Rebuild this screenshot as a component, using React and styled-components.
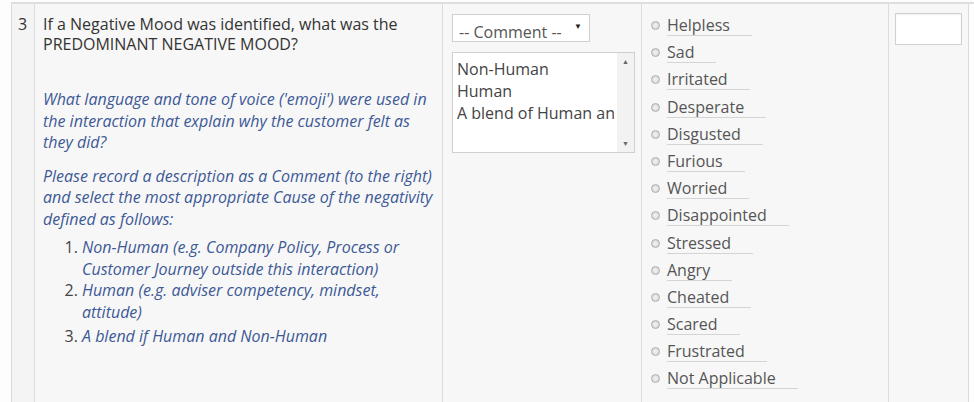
import styled, { createGlobalStyle } from "styled-components"

/* --------------------------------- STYLES --------------------------------- */

const Global = createGlobalStyle`
	html, body {
		margin: 0;
		padding: 0;
		background: #fdfdfd;
		overflow: hidden;
	}
	body {
		font-family: "Open Sans", "Noto Sans", sans-serif;
		font-size: 16px;
		color: #333;
	}
`

const Page = styled.div`
	padding-top: 2px;
`

const Row = styled.div`
	display: grid;
	grid-template-columns: 23px 408px 199px 247px 80px;
	margin-left: 11px;
	min-height: 420px;
	border-top: 2px solid #dedede;
	border-left: 1px solid #dcdcdc;
`

const Cell = styled.div`
	box-sizing: border-box;
	background: ${({ $shade }) => $shade || "#f7f7f7"};
	border-right: 1px solid #dcdcdc;
	padding: ${({ $pad }) => $pad || "0"};
`

const Num = styled(Cell)`
	text-align: center;
	line-height: 20px;
	color: #333;
	padding-top: 10px;
	padding-right: 1px;
`

const Title = styled.div`
	line-height: 20px;
	color: #333;
	margin-bottom: 35px;
`

const Note = styled.p`
	margin: 0 0 ${({ $gap }) => $gap || 12}px;
	font-style: italic;
	line-height: 21.5px;
	color: #3d5996;
`

const Steps = styled.ol`
	margin: 0;
	padding: 0 0 0 39px;
	line-height: 21.7px;
	color: #444;
	li em {
		color: #3d5996;
	}
	li:last-child {
		margin-top: 2px;
	}
`

const Select = styled.div`
	box-sizing: border-box;
	width: 138px;
	height: 28px;
	background: #fff;
	border: 1px solid #cfcfcf;
	display: flex;
	justify-content: space-between;
	padding: 7px 7px 0 6px;
	overflow: hidden;
	color: #555;
	line-height: 21px;
	margin-bottom: 10px;
`

const Caret = styled.span`
	font-size: 8px;
	line-height: 12px;
	margin-top: -2px;
	color: #222;
`

const ListBox = styled.div`
	box-sizing: border-box;
	width: 183px;
	height: 101px;
	background: #fff;
	border: 1px solid #cfcfcf;
	display: flex;
`

const Options = styled.div`
	flex: 1;
	min-width: 0;
	margin-right: 3px;
	overflow: hidden;
	padding: 5px 0 0 4px;
	line-height: 22px;
	color: #444;
`

const Option = styled.div`
	white-space: nowrap;
	overflow: hidden;
`

const ScrollBar = styled.div`
	width: 17px;
	background: #f2f2f2;
	display: flex;
	flex-direction: column;
	justify-content: space-between;
	align-items: center;
	padding: 4px 0 4px;
	font-size: 7px;
	color: #666;
`

const Moods = styled.div`
	display: flex;
	flex-direction: column;
	align-items: flex-start;
	padding: 11px 0 0 9px;
`

const Mood = styled.label`
	display: flex;
	align-items: center;
	gap: 7px;
	margin-bottom: 6.2px;
`

const Dot = styled.span`
	box-sizing: border-box;
	width: 9px;
	height: 9px;
	border-radius: 50%;
	border: 1.5px solid #b0b0b0;
	background: radial-gradient(circle, #eeeeee 25%, #d2d2d2 80%);
`

const MoodText = styled.span`
	line-height: 20px;
	color: #555;
	padding-right: 22px;
	border-bottom: 1px solid #d4d4d4;
`

const Score = styled.div`
	box-sizing: border-box;
	width: 67px;
	height: 32px;
	background: #fff;
	border: 1px solid #d0d0d0;
	box-shadow: inset 0 1px 2px rgba(0, 0, 0, 0.06);
`

/* ------------------------------- COMPONENTS ------------------------------- */

const moods = [
	"Helpless",
	"Sad",
	"Irritated",
	"Desperate",
	"Disgusted",
	"Furious",
	"Worried",
	"Disappointed",
	"Stressed",
	"Angry",
	"Cheated",
	"Scared",
	"Frustrated",
	"Not Applicable",
]

function App() {
	return (
		<Page>
			<Global />
			<Row>
				<Num $shade="#f4f4f4">3</Num>
				<Cell $pad="10px 4px 0 8px">
					<Title>
						If a Negative Mood was identified, what was the PREDOMINANT NEGATIVE MOOD?
					</Title>
					<Note>
						What language and tone of voice ('emoji') were used in the interaction that
						explain why the customer felt as they did?
					</Note>
					<Note $gap={7}>
						Please record a description as a Comment (to the right) and select the most
						appropriate Cause of the negativity defined as follows:
					</Note>
					<Steps>
						<li>
							<em>Non-Human (e.g. Company Policy, Process or Customer Journey outside this interaction)</em>
						</li>
						<li>
							<em>Human (e.g. adviser competency, mindset, attitude)</em>
						</li>
						<li>
							<em>A blend if Human and Non-Human</em>
						</li>
					</Steps>
				</Cell>
				<Cell $pad="10px 9px 0 9px">
					<Select>
						<span>-- Comment --</span>
						<Caret>▼</Caret>
					</Select>
					<ListBox>
						<Options>
							<Option>Non-Human</Option>
							<Option>Human</Option>
							<Option>A blend of Human and Non-Human</Option>
						</Options>
						<ScrollBar>
							<span>▲</span>
							<span>▼</span>
						</ScrollBar>
					</ListBox>
				</Cell>
				<Cell>
					<Moods>
						{moods.map((m) => (
							<Mood key={m}>
								<Dot />
								<MoodText>{m}</MoodText>
							</Mood>
						))}
					</Moods>
				</Cell>
				<Cell $pad="9px 6px 0 6px">
					<Score />
				</Cell>
			</Row>
		</Page>
	)
}

export default App
